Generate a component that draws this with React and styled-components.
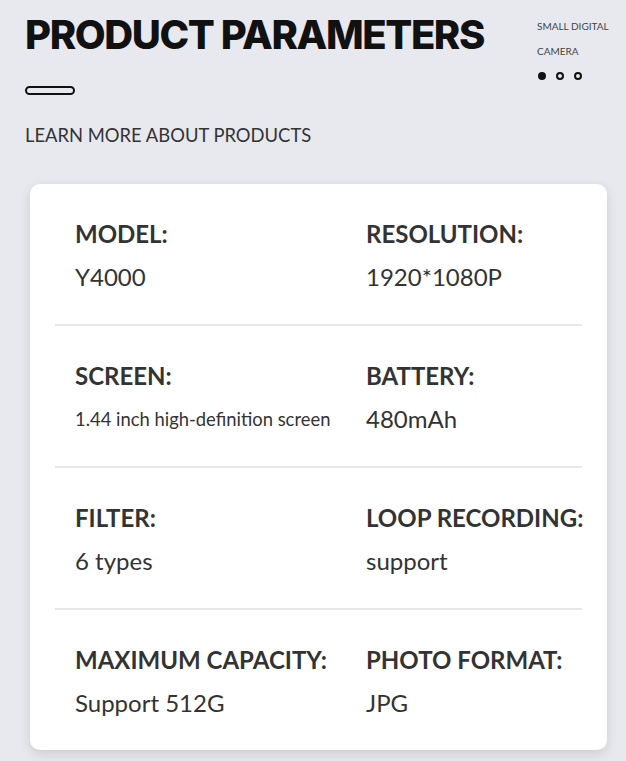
import React from "react";
import styled, { createGlobalStyle } from "styled-components";

const Global = createGlobalStyle`
  html, body { margin: 0; padding: 0; background: #e8e9ef; }
  body { font-family: "Lato", "Noto Sans", sans-serif; color: #333; }
`;

const Page = styled.div`
  width: 626px;
  height: 761px;
  overflow: hidden;
  box-sizing: border-box;
  padding: 12px 19px 0 25px;
  background: #e8e9ef;
`;

const Header = styled.header`
  display: flex;
  justify-content: space-between;
  align-items: flex-start;
`;

const TitleBlock = styled.div`
  display: flex;
  flex-direction: column;
`;

const Title = styled.h1`
  margin: 0;
  font-family: "Inter", "Roboto", sans-serif;
  font-weight: 800;
  font-size: 40px;
  line-height: 46px;
  letter-spacing: -1.4px;
  color: #111;
`;

const Pill = styled.span`
  display: block;
  width: 50px;
  height: 9px;
  box-sizing: border-box;
  border: 2px solid #111;
  border-radius: 5px;
  margin-top: 28px;
`;

const Subtitle = styled.p`
  margin: 28px 0 0;
  font-family: "Lato", sans-serif;
  font-weight: 400;
  font-size: 18.4px;
  line-height: 24px;
  color: #333;
`;

const Side = styled.div`
  display: flex;
  flex-direction: column;
  padding-top: 2px;
  width: 70px;
`;

const SideText = styled.div`
  font-size: 10px;
  line-height: 25px;
  color: #444;
  white-space: nowrap;
`;

const Dots = styled.div`
  display: flex;
  gap: 10px;
  margin-top: 8px;
  padding-left: 1px;
`;

const Dot = styled.span`
  width: 8px;
  height: 8px;
  box-sizing: border-box;
  border-radius: 50%;
  border: 2px solid #111;
  background: ${(p) => (p.$active ? "#111" : "transparent")};
`;

const Card = styled.section`
  margin: 37px 0 0 5px;
  width: 577px;
  box-sizing: border-box;
  background: #fff;
  border-radius: 10px;
  box-shadow: 0 4px 12px rgba(0, 0, 0, 0.12);
  padding: 0 25px;
`;

const Row = styled.div`
  display: grid;
  grid-template-columns: 291px 1fr;
  padding: 34px 0 31px 20px;
  border-top: ${(p) => (p.$first ? "none" : "2px solid #e7e7ea")};
`;

const Cell = styled.div`
  display: flex;
  flex-direction: column;
  white-space: nowrap;
`;

const Label = styled.div`
  font-weight: 700;
  font-size: 24px;
  line-height: 32px;
  color: #333;
`;

const Value = styled.div`
  margin-top: 11px;
  font-weight: 400;
  font-size: ${(p) => (p.$small ? "18.4px" : "24px")};
  line-height: 32px;
  color: #333;
`;

const rows = [
  [
    ["MODEL:", "Y4000"],
    ["RESOLUTION:", "1920*1080P"],
  ],
  [
    ["SCREEN:", "1.44 inch high-definition screen", true],
    ["BATTERY:", "480mAh"],
  ],
  [
    ["FILTER:", "6 types"],
    ["LOOP RECORDING:", "support"],
  ],
  [
    ["MAXIMUM CAPACITY:", "Support 512G"],
    ["PHOTO FORMAT:", "JPG"],
  ],
];

export default function App() {
  return (
    <>
      <Global />
      <Page>
        <Header>
          <TitleBlock>
            <Title>PRODUCT PARAMETERS</Title>
            <Pill />
            <Subtitle>LEARN MORE ABOUT PRODUCTS</Subtitle>
          </TitleBlock>
          <Side>
            <SideText>SMALL DIGITAL</SideText>
            <SideText>CAMERA</SideText>
            <Dots>
              <Dot $active />
              <Dot />
              <Dot />
            </Dots>
          </Side>
        </Header>
        <Card>
          {rows.map((r, i) => (
            <Row key={i} $first={i === 0}>
              {r.map(([l, v, s]) => (
                <Cell key={l}>
                  <Label>{l}</Label>
                  <Value $small={s}>{v}</Value>
                </Cell>
              ))}
            </Row>
          ))}
        </Card>
      </Page>
    </>
  );
}
